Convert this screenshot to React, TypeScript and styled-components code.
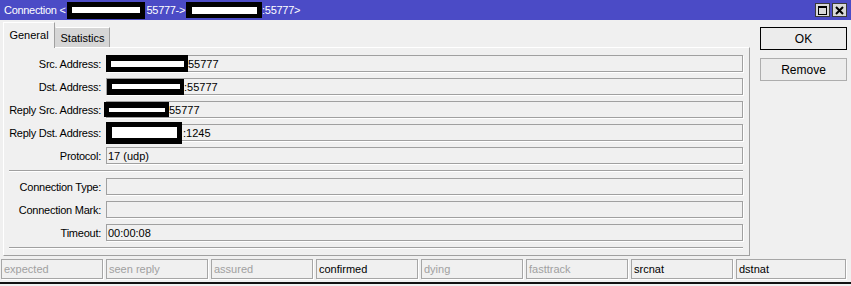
import React from "react";
import styled, { createGlobalStyle } from "styled-components";

const GlobalStyle = createGlobalStyle`
  html, body {
    margin: 0;
    padding: 0;
    background: #f0f0f0;
  }
  body {
    font-family: "Liberation Sans", Arial, sans-serif;
    font-size: 11px;
    color: #000;
  }
`;

const Window = styled.div`
  width: 851px;
  height: 286px;
  display: flex;
  flex-direction: column;
  background: #f0f0f0;
  overflow: hidden;
`;

const TitleBar = styled.div`
  height: 20px;
  flex: none;
  display: flex;
  align-items: center;
  padding: 0 4px;
  background: #4b4bc6;
  color: #fff;
  white-space: pre;
  letter-spacing: -0.3px;
`;

const TitleText = styled.span`
  display: flex;
  align-items: center;
  flex: 1;
`;

const WinButtons = styled.div`
  display: flex;
  gap: 2px;
`;

const WinButton = styled.div`
  width: 15px;
  height: 14px;
  box-sizing: border-box;
  border: 1px solid #3a3a3a;
  background: #d8d8d8;
  display: flex;
  align-items: center;
  justify-content: center;
`;

const Redact = styled.span<{ $w: number; $h: number; $bw: number; $bh: number; $ml?: number; $mr?: number }>`
  flex: none;
  display: inline-flex;
  align-items: center;
  justify-content: center;
  width: ${(p) => p.$w}px;
  height: ${(p) => p.$h}px;
  margin: -4px ${(p) => p.$mr ?? 0}px -4px ${(p) => p.$ml ?? 0}px;
  background: #000;
  &::after {
    content: "";
    width: ${(p) => p.$bw}px;
    height: ${(p) => p.$bh}px;
    background: #fff;
  }
`;

const Main = styled.div`
  display: flex;
  flex: none;
`;

const LeftCol = styled.div`
  width: 747px;
  margin-left: 3px;
  padding-top: 2px;
`;

const Tabs = styled.div`
  height: 25px;
  display: flex;
  align-items: flex-end;
`;

const Tab = styled.div<{ $active?: boolean }>`
  box-sizing: border-box;
  display: flex;
  align-items: center;
  justify-content: center;
  height: ${(p) => (p.$active ? "26px" : "20px")};
  padding: ${(p) => (p.$active ? "0 8px 1px" : "0 6px")};
  margin-bottom: ${(p) => (p.$active ? "-1px" : "0")};
  position: relative;
  z-index: ${(p) => (p.$active ? 1 : 0)};
  background: ${(p) => (p.$active ? "#f0f0f0" : "#d6d6d6")};
  border-top: 1px solid #fff;
  border-left: 1px solid ${(p) => (p.$active ? "#fff" : "#d6d6d6")};
  border-right: 1px solid #a0a0a0;
  width: ${(p) => (p.$active ? "52px" : "55px")};
`;

const Panel = styled.div`
  box-sizing: border-box;
  height: 209px;
  border-top: 1px solid #fff;
  border-left: 1px solid #fff;
  border-right: 1px solid #a0a0a0;
  border-bottom: 1px solid #a0a0a0;
  padding: 7px 6px 6px 4px;
  display: grid;
  grid-template-columns: 94px 637px;
  grid-template-rows: repeat(5, 17px) 2px repeat(3, 17px) 2px;
  column-gap: 4px;
  row-gap: 6px;
`;

const Label = styled.div`
  display: flex;
  align-items: center;
  justify-content: flex-end;
  padding-right: 1px;
  white-space: nowrap;
  letter-spacing: -0.25px;
`;

const Field = styled.div`
  box-sizing: border-box;
  height: 17px;
  display: flex;
  align-items: center;
  padding-left: 1px;
  border: 1px solid #a0a0a0;
  box-shadow: 1px 1px 0 #fff;
  background: #f0f0f0;
  white-space: pre;
`;

const Separator = styled.div`
  grid-column: 1 / -1;
  margin-left: 1px;
  height: 0;
  border-top: 1px solid #a0a0a0;
  border-bottom: 1px solid #fff;
`;

const RightCol = styled.div`
  width: 87px;
  margin-left: 10px;
  padding-top: 7px;
  display: flex;
  flex-direction: column;
  gap: 8px;
`;

const Button = styled.div<{ $default?: boolean }>`
  box-sizing: border-box;
  height: 23px;
  display: flex;
  align-items: center;
  justify-content: center;
  font-size: 12px;
  background: #ececec;
  border: 1px solid ${(p) => (p.$default ? "#000" : "#adadad")};
  box-shadow: ${(p) => (p.$default ? "inset 0 0 0 1px #ececec" : "none")};
`;

const StatusBar = styled.div`
  display: flex;
  gap: 3px;
  padding-left: 1px;
  margin-top: 3px;
  height: 20px;
  flex: none;
`;

const StatusCell = styled.div<{ $on?: boolean; $w: number }>`
  box-sizing: border-box;
  width: ${(p) => p.$w}px;
  height: 20px;
  display: flex;
  align-items: center;
  padding-left: 2px;
  border: 1px solid #a6a6a6;
  box-shadow: 1px 1px 0 #fff;
  color: ${(p) => (p.$on ? "#000" : "#a0a0a0")};
`;

const BottomEdge = styled.div`
  margin-top: 3px;
  height: 2px;
  background: #111;
  flex: none;
`;

const statuses: { name: string; on: boolean }[] = [
  { name: "expected", on: false },
  { name: "seen reply", on: false },
  { name: "assured", on: false },
  { name: "confirmed", on: true },
  { name: "dying", on: false },
  { name: "fasttrack", on: false },
  { name: "srcnat", on: true },
  { name: "dstnat", on: true },
];

export default function App() {
  return (
    <>
      <GlobalStyle />
      <Window>
        <TitleBar>
          <TitleText>
            Connection {"<"}
            <Redact $w={78} $h={17} $bw={68} $bh={6} $ml={1} $mr={2} />
            55777-&gt;
            <Redact $w={76} $h={16} $bw={65} $bh={7} $ml={1} />
            :55777&gt;
          </TitleText>
          <WinButtons>
            <WinButton>
              <svg width="9" height="9" viewBox="0 0 9 9">
                <rect x="0.5" y="0.5" width="8" height="8" fill="none" stroke="#000" />
                <rect x="0" y="0" width="9" height="2" fill="#000" />
              </svg>
            </WinButton>
            <WinButton>
              <svg width="9" height="9" viewBox="0 0 9 9">
                <path d="M1 1 L8 8 M8 1 L1 8" stroke="#000" strokeWidth="2" />
              </svg>
            </WinButton>
          </WinButtons>
        </TitleBar>
        <Main>
          <LeftCol>
            <Tabs>
              <Tab $active>General</Tab>
              <Tab>Statistics</Tab>
            </Tabs>
            <Panel>
              <Label>Src. Address:</Label>
              <Field>
                <Redact $w={82} $h={17} $bw={73} $bh={6} $ml={-2} />
                55777
              </Field>
              <Label>Dst. Address:</Label>
              <Field>
                <Redact $w={77} $h={16} $bw={68} $bh={5} $ml={-1} />
                :55777
              </Field>
              <Label>Reply Src. Address:</Label>
              <Field>
                <Redact $w={65} $h={15} $bw={56} $bh={4} $ml={-4} />
                55777
              </Field>
              <Label>Reply Dst. Address:</Label>
              <Field>
                <Redact $w={76} $h={22} $bw={65} $bh={11} $ml={-2} $mr={1} />
                :1245
              </Field>
              <Label>Protocol:</Label>
              <Field>17 (udp)</Field>
              <Separator />
              <Label>Connection Type:</Label>
              <Field />
              <Label>Connection Mark:</Label>
              <Field />
              <Label>Timeout:</Label>
              <Field>00:00:08</Field>
              <Separator />
            </Panel>
          </LeftCol>
          <RightCol>
            <Button $default>OK</Button>
            <Button>Remove</Button>
          </RightCol>
        </Main>
        <StatusBar>
          {statuses.map((s, i) => (
            <StatusCell key={s.name} $on={s.on} $w={i === statuses.length - 1 ? 110 : 102}>
              {s.name}
            </StatusCell>
          ))}
        </StatusBar>
        <BottomEdge />
      </Window>
    </>
  );
}
